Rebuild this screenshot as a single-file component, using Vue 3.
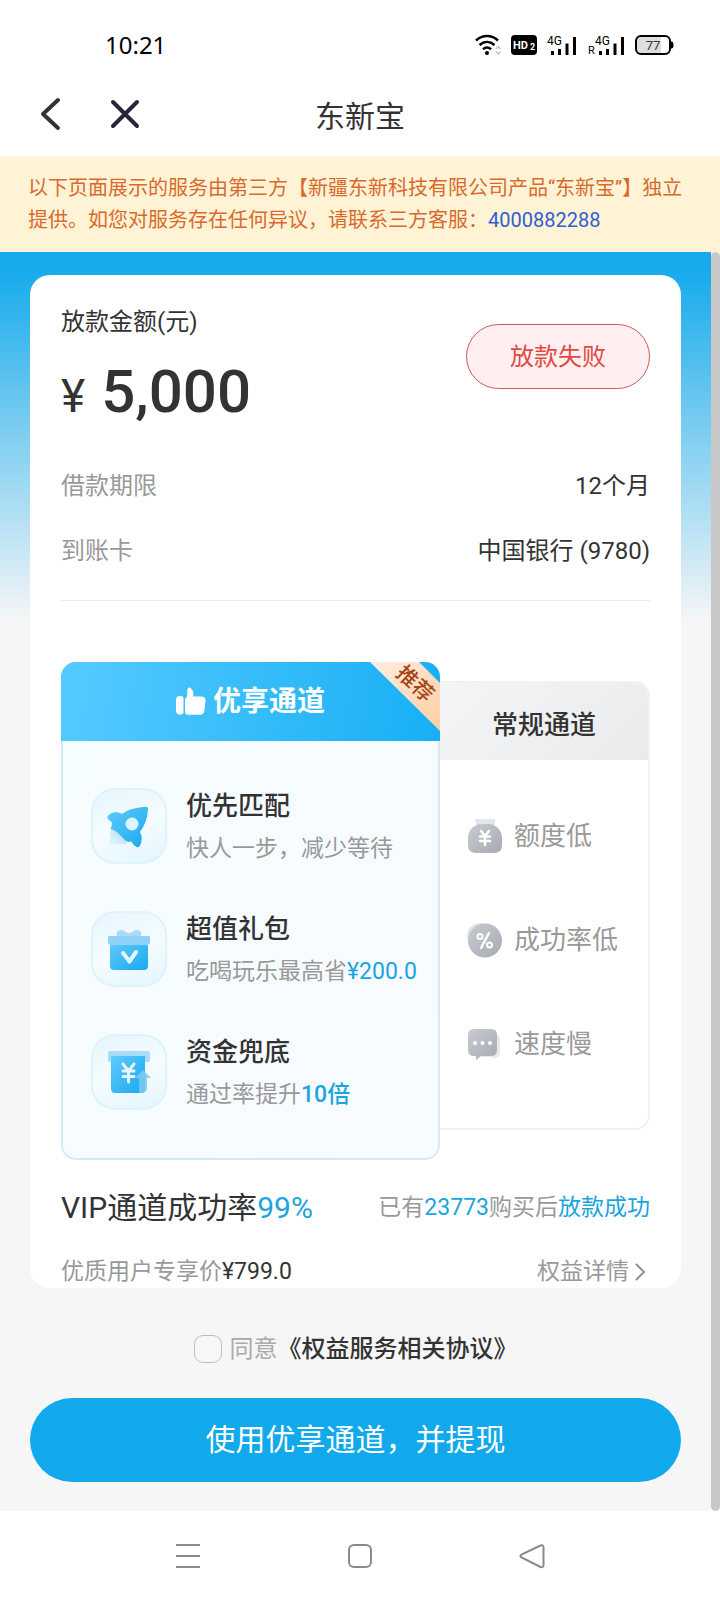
<script setup>
import { ref } from 'vue'

const agreed = ref(false)
const perks = [
  { icon: 'rocket', title: '优先匹配', text: '快人一步，减少等待', mark: '', strong: false },
  { icon: 'gift', title: '超值礼包', text: '吃喝玩乐最高省', mark: '¥200.0', strong: false },
  { icon: 'money', title: '资金兜底', text: '通过率提升', mark: '10倍', strong: true },
]
const limits = [
  { icon: 'bag', text: '额度低' },
  { icon: 'percent', text: '成功率低' },
  { icon: 'chat', text: '速度慢' },
]
</script>

<template>
  <div class="page">
    <header class="status">
      <time class="clock">10:21</time>
      <div class="signals">
        <svg class="wifi" width="26" height="22" viewBox="0 0 26 22" fill="none">
          <path d="M1 6.500C7.500.600 16.500.600 23 6.500M4.500 11c4.600-4 10.400-4 15 0M8 15.200c2.500-2.200 5.500-2.200 8 0" stroke="#000" stroke-width="2.500" />
          <circle cx="12" cy="19" r="2" fill="#000" />
          <path d="M21 15l2.300-2.500L25.500 15M21 17.500l2.300 2.500 2.200-2.500" stroke="#c4c4c4" stroke-width="1.500" />
        </svg>
        <svg width="26" height="20" viewBox="0 0 26 20">
          <rect width="26" height="20" rx="4" fill="#000" />
          <text x="2" y="14" font-size="11" font-weight="700" fill="#fff">HD</text>
          <text x="19" y="15" font-size="9" font-weight="700" fill="#fff">2</text>
        </svg>
        <svg width="30" height="21" viewBox="0 0 30 21">
          <text x="0" y="10" font-size="12">4G</text>
          <path d="M5.500 16v4M12.500 14v6M20 8.500V20M27.500 2v18" stroke="#000" stroke-width="3" />
        </svg>
        <svg width="38" height="21" viewBox="0 0 38 21">
          <text x="1" y="19" font-size="11">R</text>
          <text x="8" y="10" font-size="12">4G</text>
          <path d="M13.500 16v4M20.500 14v6M28 8.500V20M35.500 2v18" stroke="#000" stroke-width="3" />
        </svg>
        <svg class="battery" width="39" height="20" viewBox="0 0 39 20">
          <rect x="1" y="1" width="34" height="18" rx="5" fill="#fff" />
          <path d="M6 2h20v16H6a4 4 0 0 1-4-4V6a4 4 0 0 1 4-4z" fill="#dedede" />
          <rect x="1" y="1" width="34" height="18" rx="5" fill="none" stroke="#000" stroke-width="2" />
          <path d="M36 6.500c2 0 2.500 1 2.500 3.500s-.5 3.500-2.500 3.500z" fill="#000" />
          <text x="18" y="15" font-size="13" text-anchor="middle" fill="#333">77</text>
        </svg>
      </div>
    </header>

    <nav class="bar">
      <div class="bar-actions">
        <button type="button" aria-label="返回">
          <svg width="32" height="36" viewBox="0 0 32 36" fill="none"><path d="M23 4L8 18l15 14" stroke="#333" stroke-width="4" stroke-linecap="round" stroke-linejoin="round" /></svg>
        </button>
        <button type="button" aria-label="关闭">
          <svg width="32" height="36" viewBox="0 0 32 36" fill="none"><path d="M4 6l24 24M28 6L4 30" stroke="#26263a" stroke-width="4" stroke-linecap="round" /></svg>
        </button>
      </div>
      <h1>东新宝</h1>
    </nav>

    <p class="notice">以下页面展示的服务由第三方【新疆东新科技有限公司产品“东新宝”】独立提供。如您对服务存在任何异议，请联系三方客服：<a href="tel:4000882288">4000882288</a></p>

    <div class="view">
      <main class="content">
        <section class="card">
          <div class="amount">
            <div>
              <div class="label">放款金额(元)</div>
              <div class="sum"><span class="yen">¥</span><strong>5,000</strong></div>
            </div>
            <button type="button" class="failed">放款失败</button>
          </div>
          <dl class="facts">
            <div><dt>借款期限</dt><dd>12个月</dd></div>
            <div><dt>到账卡</dt><dd>中国银行 (9780)</dd></div>
          </dl>

          <div class="channels">
            <article class="vip">
              <h2>
                <svg width="30" height="29" viewBox="0 0 30 29" fill="#fff">
                  <path d="M4 9h1q2.500 0 2.500 2.500V25q0 2.500-2.500 2.500H4Q0 27.500 0 23.500V13Q0 9 4 9z" />
                  <path d="M9 12c3-2.500 2.200-5 2.300-8.500C11.400 1.500 13-.2 14.500 1c2.500 2 3.500 4.500 2.500 8.500h8.500c2.700 0 4.200 1.800 4 4.200l-1.200 10.500c-.3 2.300-1.900 3.500-4 3.500H12q-3 0-3-3z" />
                </svg>
                优享通道
              </h2>
              <svg class="ribbon" width="70" height="70" viewBox="0 0 70 70">
                <defs><linearGradient id="ribbonFill" x1="0" y1="0" x2="1" y2="1"><stop offset="0" stop-color="#ffeee2" /><stop offset="1" stop-color="#ffcfa2" /></linearGradient></defs>
                <path d="M0 0h49l21 21v48z" fill="url(#ribbonFill)" />
                <text transform="translate(45 22) rotate(43)" y="7" text-anchor="middle" font-size="21" font-weight="500" fill="#a5461a">推荐</text>
              </svg>
              <ul>
                <li v-for="p in perks" :key="p.icon">
                  <span class="tile">
                    <svg v-if="p.icon === 'rocket'" width="46" height="46" viewBox="0 0 46 46">
                      <defs>
                        <linearGradient id="blueFill" x1="0" y1="0" x2="1" y2="1"><stop offset="0" stop-color="#5fcbfb" /><stop offset="1" stop-color="#19a9ef" /></linearGradient>
                        <linearGradient id="flameFill" x1="1" y1="0" x2="0" y2="1"><stop offset="0" stop-color="#a4d8f5" /><stop offset="1" stop-color="#e9f8fe" /></linearGradient>
                      </defs>
                      <path d="M6 26l-3 6 2 3-2 3 1 4 5-1 3 1 3-1 6 0-2-8-8-9z" fill="url(#flameFill)" />
                      <path d="M40.500 4C31 4 23 6 16 11c-3-2-8-2.500-12 0-3 2-3.500 4-1.500 5.500L6 19.500c0 2-.5 4-1.500 6.500 4 1 8 4 11 7.500 3 3 5.500 5.500 7 5.500 1 0 2-.5 3-.5 1 2.500 3 4.500 5 5.500 2 .8 3.500-.5 4.500-4 1.200-4 1-7.500-1-11 5-7 7.500-14 8-23 0-1.500-.5-2-1.500-2z" fill="url(#blueFill)" />
                      <circle cx="26" cy="21" r="6.500" fill="#ddf3fe" />
                    </svg>
                    <svg v-else-if="p.icon === 'gift'" width="46" height="46" viewBox="0 0 46 46">
                      <path d="M12 11c-3-3-1-7 3-7s4 3 8 3 4-3 8-3 6 4 3 7z" fill="#a9dcf8" />
                      <rect x="4" y="17" width="38" height="27" rx="4" fill="url(#blueFill)" />
                      <path d="M2 11q0-1 1-1h40q1 0 1 1v6l-2 2H4l-2-2z" fill="#8fd2f7" />
                      <path d="M17 27l6.500 8.500L30 26" fill="none" stroke="#e6f7ff" stroke-width="4" stroke-linecap="round" stroke-linejoin="round" />
                    </svg>
                    <svg v-else width="46" height="46" viewBox="0 0 46 46">
                      <path d="M4 2h38q2 0 2 2v7q0 2-2 2H4q-2 0-2-2V4q0-2 2-2z" fill="#a9dcf8" />
                      <path d="M5 7h34v33q0 4-4 4H9q-4 0-4-4z" fill="url(#blueFill)" />
                      <path d="M17 15l5.500 7 5.500-7M17 22h11M17 27.500h11M22.500 22v11" fill="none" stroke="#e4f6ff" stroke-width="3" stroke-linecap="round" />
                      <path d="M37 21l8 8h-4v11q-1 4-5 4h-3V29h-4z" fill="#7fc9ee" opacity=".85" />
                    </svg>
                  </span>
                  <div>
                    <h3>{{ p.title }}</h3>
                    <p>{{ p.text }}<span class="mark" :class="{ strong: p.strong }">{{ p.mark }}</span></p>
                  </div>
                </li>
              </ul>
            </article>

            <article class="plain">
              <h2>常规通道</h2>
              <ul>
                <li v-for="l in limits" :key="l.icon">
                  <svg v-if="l.icon === 'bag'" width="36" height="36" viewBox="0 0 36 36">
                    <defs><linearGradient id="grayFill" x1="0" y1="0" x2="1" y2="1"><stop offset="0" stop-color="#c8cbd1" /><stop offset="1" stop-color="#a7aab2" /></linearGradient></defs>
                    <path d="M8 1h20q1 4-2 8H11Q8 5 8 1z" fill="#e5e6ec" />
                    <path d="M13 6h10c7 1 12 7 12 14v7q0 8-8 8H9q-8 0-8-8v-7C1 13 6 7 13 6z" fill="url(#grayFill)" />
                    <path d="M14 13l4 5 4-5M13 18.500h10M13 23h10M18 18v9" fill="none" stroke="#fff" stroke-width="2.500" stroke-linecap="round" />
                  </svg>
                  <svg v-else-if="l.icon === 'percent'" width="36" height="36" viewBox="0 0 36 36">
                    <circle cx="13" cy="14" r="13" fill="#e2e4e7" />
                    <circle cx="18" cy="18.500" r="17" fill="url(#grayFill)" />
                    <path d="M22 11l-8 15" stroke="#fff" stroke-width="2.500" stroke-linecap="round" />
                    <circle cx="13" cy="14.500" r="2.500" fill="none" stroke="#fff" stroke-width="2" />
                    <circle cx="22.500" cy="23" r="2.500" fill="none" stroke="#fff" stroke-width="2" />
                  </svg>
                  <svg v-else width="36" height="36" viewBox="0 0 36 36">
                    <path d="M12 9h17q4 0 4 4v15q0 3-3 3l-3 2-2-2H12z" fill="#e8e9ed" />
                    <path d="M7 3h17q6 0 6 6v15q0 6-6 6H14l-5 4v-4H7q-6 0-6-6V9q0-6 6-6z" fill="url(#grayFill)" />
                    <g fill="#fff"><circle cx="8" cy="17" r="2" /><circle cx="15.500" cy="17" r="2" /><circle cx="23" cy="17" r="2" /></g>
                  </svg>
                  {{ l.text }}
                </li>
              </ul>
            </article>
          </div>

          <div class="line rate">
            <span class="vip-rate">VIP通道成功率<span class="mark">99%</span></span>
            <span class="muted">已有<span class="mark">23773</span>购买后<span class="mark">放款成功</span></span>
          </div>
          <div class="line price">
            <span class="muted">优质用户专享价<span class="dark">¥799.0</span></span>
            <a href="#" class="muted more">权益详情
              <svg width="16" height="20" viewBox="0 0 16 20" fill="none"><path d="M2 2l8 8-8 8" stroke="#8f8f8f" stroke-width="2" /></svg>
            </a>
          </div>
        </section>

        <div class="agree">
          <input id="agree" v-model="agreed" type="checkbox" />
          <label for="agree">同意</label>
          <a href="#">《权益服务相关协议》</a>
        </div>
        <button type="button" class="submit">使用优享通道，并提现</button>
      </main>
      <div class="scroll"></div>
    </div>

    <footer class="keys">
      <button type="button" aria-label="最近任务">
        <svg width="26" height="26" viewBox="0 0 26 26"><path d="M1 2h24M1 13h24M1 24h24" stroke="#8a8a8a" stroke-width="2" /></svg>
      </button>
      <button type="button" aria-label="主屏幕">
        <svg width="26" height="26" viewBox="0 0 26 26"><rect x="2" y="2" width="22" height="22" rx="5" fill="none" stroke="#8a8a8a" stroke-width="2" /></svg>
      </button>
      <button type="button" aria-label="返回上一级">
        <svg width="26" height="26" viewBox="0 0 26 26"><path d="M21.500 2.500L2.500 11.500q-2 1.500 0 3L21.500 24q3 1 3-2V4.500q0-3-3-2z" fill="none" stroke="#8a8a8a" stroke-width="2" /></svg>
      </button>
    </footer>
  </div>
</template>

<style>
body { background: #fff; }
</style>

<style scoped>
.page {
  display: flex;
  flex-direction: column;
  min-height: 100vh;
  background: #fff;
  color: #333;
  font-family: Roboto, "Noto Sans CJK SC", sans-serif;
  font-size: 24px;
  line-height: 36px;
  font-weight: 400;
}
.page *, .page { box-sizing: border-box; }
h1, h2, h3, p, ul, dl, dd { margin: 0; padding: 0; font-weight: 400; }
ul { list-style: none; }
a { color: inherit; text-decoration: none; }
button { border: 0; padding: 0; background: none; font: inherit; color: inherit; cursor: pointer; }
svg { display: block; flex: none; }

.status { display: flex; justify-content: space-between; align-items: center; height: 78px; padding: 12px 46px 0 105px; }
.clock { font-family: "Noto Sans", sans-serif; font-size: 24px; line-height: 32px; color: #000; }
.signals { display: flex; align-items: center; gap: 10px; }

.bar { display: grid; grid-template-columns: 1fr auto 1fr; align-items: center; height: 78px; padding: 0 35px; }
.bar-actions { display: flex; gap: 42px; padding-bottom: 6px; }
.bar h1 { font-size: 30px; line-height: 40px; }

.notice { padding: 16px 28px; background: #fff3d6; color: #d96a2b; font-size: 20px; line-height: 32px; }
.notice a { color: #2f5fd0; }

.view { display: flex; }
.content {
  flex: 1;
  min-width: 0;
  padding: 23px 30px 29px;
  background: linear-gradient(#14a9ea, #1aacec 24px, #f6f6f6 370px) #f6f6f6;
}
.scroll { width: 9px; border-radius: 5px; background: #c9c8c8; }
.card { padding: 31px 31px 0; border-radius: 20px; background: #fff; }

.amount { display: flex; justify-content: space-between; align-items: flex-start; }
.label { line-height: 32px; }
.sum { display: flex; align-items: baseline; gap: 16px; margin-top: 18px; line-height: 72px; }
.yen { font-size: 46px; }
.sum strong { font-size: 60px; font-weight: 500; }
.failed { width: 184px; height: 65px; margin-top: 18px; border: 1px solid #cc5a5f; border-radius: 33px; background: #ffeff1; color: #e04a42; }

.facts { padding: 38px 0 32px; border-bottom: 1px solid #e9e9e9; }
.facts div { display: flex; justify-content: space-between; line-height: 33px; }
.facts div + div { margin-top: 32px; }
.facts dt { color: #999; }

.channels { display: grid; grid-template-columns: 379fr 210fr; align-items: start; padding-top: 61px; }
.vip { position: relative; border-radius: 15px; background: linear-gradient(125deg, #f5fcff, #f8fbff); box-shadow: inset 0 0 0 2px #d5ebf4; }
.vip h2 {
  display: flex; align-items: center; justify-content: center; gap: 7px;
  height: 79px; border-radius: 15px 15px 0 0;
  background: linear-gradient(100deg, #56caff, #17aff5);
  color: #fff; font-size: 28px; font-weight: 700;
}
.ribbon { position: absolute; top: 0; right: 0; }
.vip ul { display: grid; gap: 47px; padding: 47px 0 50px 30px; }
.vip li { display: flex; gap: 19px; height: 76px; }
.tile {
  display: flex; align-items: center; justify-content: center; flex: none;
  width: 76px; height: 76px; border: 2px solid #dff3fb; border-radius: 24px;
  background: linear-gradient(160deg, #e5f6fe, #f6fcff 50%, #e2f6fe);
}
.vip h3 { font-size: 26px; line-height: 36px; font-weight: 500; }
.vip li p { margin-top: 9px; font-size: 23px; line-height: 32px; color: #999; white-space: nowrap; }
.mark { color: #1aa5dd; }
.mark.strong { font-weight: 500; }

.plain { margin-top: 19px; border: 2px solid #f0f1f3; border-left: 0; border-radius: 0 15px 15px 0; background: #fff; }
.plain h2 {
  height: 77px; border-radius: 0 13px 0 0;
  background: linear-gradient(135deg, #f4f5f7, #e9eaec);
  font-size: 26px; line-height: 84px; font-weight: 500; text-align: center;
}
.plain ul { display: grid; gap: 68px; padding: 58px 0 66px 27px; }
.plain li { display: flex; align-items: center; gap: 11px; height: 36px; font-size: 26px; color: #999; white-space: nowrap; }

.line { display: flex; justify-content: space-between; align-items: center; }
.rate { margin-top: 28px; line-height: 40px; }
.vip-rate { font-size: 30px; }
.muted { font-size: 23px; color: #999; }
.dark { color: #333; }
.price { margin-top: 28px; line-height: 32px; }
.more { display: flex; align-items: center; gap: 5px; }

.agree { display: flex; align-items: center; justify-content: center; margin-top: 43px; }
.agree input { appearance: none; width: 28px; height: 28px; margin: 0 8px 0 0; border: 1px solid #bdbdbd; border-radius: 9px; background: #f7f7f7; }
.agree input:checked { background: #11a9eb; border-color: #11a9eb; }
.agree label { color: #aaa; }
.agree a { font-weight: 500; }
.submit { display: block; width: 100%; height: 84px; margin-top: 31px; border-radius: 42px; background: #11a9eb; color: #fff; font-size: 30px; }

.keys { display: flex; justify-content: center; gap: 146px; padding: 32px 0; }
</style>
